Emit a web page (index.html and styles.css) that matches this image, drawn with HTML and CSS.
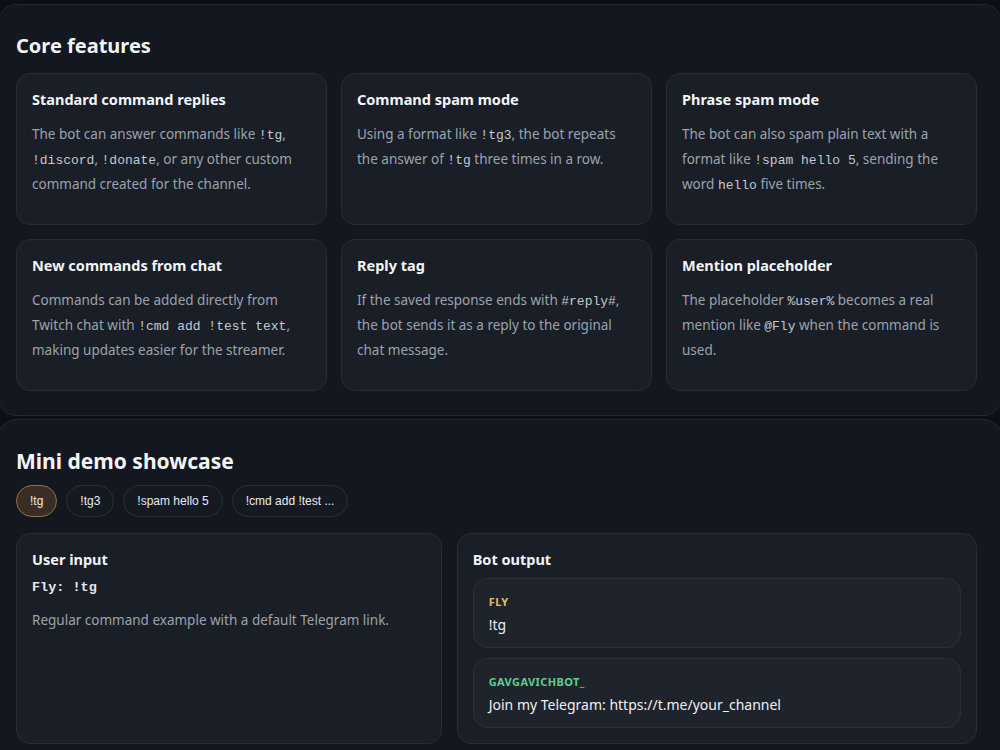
FILE: index.html
```html
<!DOCTYPE html>
<html lang="en">
<head>
<meta charset="utf-8">
<title>Bot features</title>
<link rel="stylesheet" href="styles.css">
</head>
<body>
<main class="page">
  <section class="panel panel-features">
    <h2 class="panel-title">Core features</h2>
    <div class="feature-grid">
      <article class="card">
        <h3 class="card-title">Standard command replies</h3>
        <p class="card-text">The bot can answer commands like <code>!tg</code>, <code>!discord</code>, <code>!donate</code>, or any other custom command created for the channel.</p>
      </article>
      <article class="card">
        <h3 class="card-title">Command spam mode</h3>
        <p class="card-text">Using a format like <code>!tg3</code>, the bot repeats the answer of <code>!tg</code> three times in a row.</p>
      </article>
      <article class="card">
        <h3 class="card-title">Phrase spam mode</h3>
        <p class="card-text">The bot can also spam plain text with a format like <code>!spam hello 5</code>, sending the word <code>hello</code> five times.</p>
      </article>
      <article class="card">
        <h3 class="card-title">New commands from chat</h3>
        <p class="card-text">Commands can be added directly from Twitch chat with <code>!cmd add !test text</code>, making updates easier for the streamer.</p>
      </article>
      <article class="card">
        <h3 class="card-title">Reply tag</h3>
        <p class="card-text">If the saved response ends with <code>#reply#</code>, the bot sends it as a reply to the original chat message.</p>
      </article>
      <article class="card">
        <h3 class="card-title">Mention placeholder</h3>
        <p class="card-text">The placeholder <code>%user%</code> becomes a real mention like <code>@Fly</code> when the command is used.</p>
      </article>
    </div>
  </section>

  <section class="panel panel-demo">
    <h2 class="panel-title panel-title-lg">Mini demo showcase</h2>
    <div class="chips">
      <button class="chip chip-active" type="button">!tg</button>
      <button class="chip" type="button">!tg3</button>
      <button class="chip" type="button">!spam hello 5</button>
      <button class="chip" type="button">!cmd add !test ...</button>
    </div>
    <div class="demo-grid">
      <div class="card demo-card">
        <h3 class="card-title">User input</h3>
        <div class="demo-input">Fly: !tg</div>
        <p class="demo-note">Regular command example with a default Telegram link.</p>
      </div>
      <div class="card demo-card">
        <h3 class="card-title">Bot output</h3>
        <div class="messages">
          <div class="message">
            <div class="msg-author author-user">FLY</div>
            <div class="msg-text">!tg</div>
          </div>
          <div class="message">
            <div class="msg-author author-bot">GAVGAVICHBOT_</div>
            <div class="msg-text">Join my Telegram: https://t.me/your_channel</div>
          </div>
        </div>
      </div>
    </div>
  </section>
</main>
</body>
</html>
```
FILE: styles.css
```css
* { box-sizing: border-box; }

html, body {
  margin: 0;
  padding: 0;
  background: #0c0f14;
}

body {
  font-family: "Noto Sans", "Open Sans", sans-serif;
  color: #e9edf2;
  overflow: hidden;
}

.page {
  padding-top: 4px;
  display: flex;
  flex-direction: column;
  gap: 3px;
}

.panel {
  margin: 0 -3px;
  background: #131720;
  border: 1px solid #232833;
  border-radius: 20px;
  padding: 28px 25px 24px 18px;
}

.panel-demo {
  padding-top: 27px;
  height: 400px;
}

.panel-title {
  margin: 0 0 14px;
  font-size: 20px;
  line-height: 26px;
  font-weight: 700;
  color: #f2f5f8;
}

.panel-title-lg {
  font-size: 21px;
  line-height: 28px;
  margin-bottom: 10px;
}

.feature-grid {
  display: grid;
  grid-template-columns: repeat(3, 1fr);
  gap: 14px;
}

.card {
  background: #1a1e26;
  border: 1px solid #272c35;
  border-radius: 14px;
  padding: 15px 15px 27px;
}

.card-title {
  margin: 0 0 13px;
  font-size: 14.5px;
  line-height: 20px;
  font-weight: 700;
  color: #f3f5f8;
}

.card-text {
  margin: 0;
  font-size: 13.5px;
  line-height: 25px;
  color: #9ba3ae;
}

code {
  font-family: "Liberation Mono", "DejaVu Sans Mono", monospace;
  font-size: 13px;
  line-height: 1;
  color: #c3c9d1;
}

.chips {
  display: flex;
  gap: 9px;
  margin-bottom: 16px;
}

.chip {
  height: 32px;
  padding: 0 13px;
  border-radius: 16px;
  border: 1px solid #2a2f38;
  background: #151a22;
  color: #e8ebf0;
  font-family: "Liberation Sans", Arial, sans-serif;
  font-size: 12px;
  cursor: pointer;
}

.chip-active {
  background: #3a2e24;
  border-color: #8f7048;
  color: #f3ebe0;
}

.demo-grid {
  display: grid;
  grid-template-columns: 9fr 11fr;
  gap: 15px;
}

.demo-card {
  padding: 15px;
}

.demo-card .card-title {
  margin-bottom: 9px;
}

.demo-input {
  font-family: "Liberation Mono", "DejaVu Sans Mono", monospace;
  font-size: 13.5px;
  line-height: 20px;
  font-weight: 700;
  color: #e4e8ed;
  margin-bottom: 12px;
}

.demo-note {
  margin: 0;
  font-size: 13.5px;
  line-height: 20px;
  color: #9ba3ae;
}

.messages {
  display: flex;
  flex-direction: column;
  gap: 10px;
  margin-top: 1px;
}

.message {
  background: #1f232b;
  border: 1px solid #2b3039;
  border-radius: 14px;
  padding: 16px 15px 12px;
}

.msg-author {
  font-size: 11px;
  line-height: 14px;
  font-weight: 700;
  letter-spacing: 0.4px;
  margin-bottom: 6px;
}

.author-user { color: #e2bd67; }
.author-bot { color: #5fcf8c; }

.msg-text {
  font-size: 14px;
  line-height: 20px;
  color: #eef1f5;
}
```
